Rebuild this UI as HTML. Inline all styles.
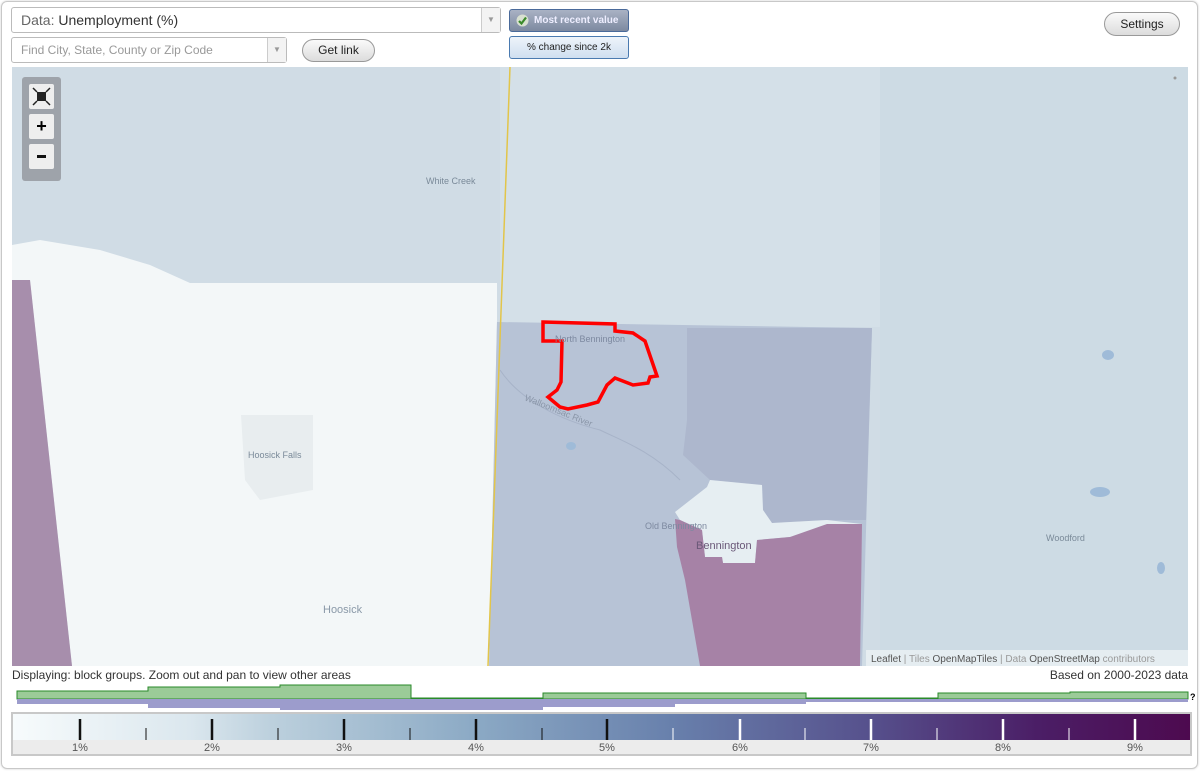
<!DOCTYPE html>
<html><head><meta charset="utf-8"><style>
*{box-sizing:border-box;margin:0;padding:0}
body{width:1200px;height:771px;background:#fff;font-family:"Liberation Sans",sans-serif;position:relative;overflow:hidden}
.card{position:absolute;left:1px;top:1px;width:1197px;height:768px;border:1px solid #c8c8c8;border-radius:6px;box-shadow:0 0 2px #ccc}
.sel{position:absolute;background:#fff;border:1px solid #bbb;border-radius:3px;color:#333}
.arrow{position:absolute;right:0;top:0;bottom:0;width:19px;border-left:1px solid #ccc;background:#f3f3f3;color:#999;font-size:8px;text-align:center}
.btn{position:absolute;border:1px solid #999;border-radius:12px;background:linear-gradient(#fafafa,#dcdcdc);font-size:12px;color:#222;text-align:center}
.t{position:absolute;font-size:12px;color:#333;white-space:nowrap}
</style></head><body>
<div class="card"></div>
<div class="sel" style="left:11px;top:7px;width:490px;height:26px;font-size:14px;line-height:24px;padding-left:9px"><span style="color:#666">Data:</span> Unemployment (%)<div class="arrow" style="line-height:24px">▼</div></div>
<div class="sel" style="left:11px;top:37px;width:276px;height:26px;font-size:12px;line-height:24px;padding-left:9px;color:#999">Find City, State, County or Zip Code<div class="arrow" style="line-height:24px">▼</div></div>
<div class="btn" style="left:302px;top:39px;width:73px;height:23px;line-height:21px">Get link</div>
<div style="position:absolute;left:509px;top:9px;width:120px;height:23px;border:1px solid #4a6a9a;border-radius:3px;background:linear-gradient(#a9b2c4,#7d89a0);color:#eef;font-size:10px;font-weight:bold;line-height:21px;padding-left:24px">Most recent value
<svg style="position:absolute;left:6px;top:4px" width="13" height="13" viewBox="0 0 13 13"><circle cx="6.5" cy="6.5" r="6" fill="#d8e0d0"/><path d="M3 7l2.5 2.5L10 3.5" stroke="#3a8a2a" stroke-width="2.2" fill="none"/></svg></div>
<div style="position:absolute;left:509px;top:36px;width:120px;height:23px;border:1px solid #4a7ab0;border-radius:3px;background:linear-gradient(#eef4fa,#cfdff0);color:#222;font-size:10px;line-height:21px;text-align:center">% change since 2k</div>
<div class="btn" style="left:1104px;top:12px;width:76px;height:24px;line-height:22px">Settings</div>

<svg style="position:absolute;left:12px;top:67px" width="1176" height="599" viewBox="12 67 1176 599">
<rect x="12" y="67" width="1176" height="599" fill="#d0dce5"/>
<rect x="500" y="67" width="380" height="260" fill="#d4e0e8"/>
<rect x="880" y="67" width="308" height="599" fill="#cddbe4"/>
<polygon points="12,245 40,240 100,250 150,265 190,283 497,283 497,320 489,666 72,666 30,280 12,280" fill="#f3f7f8"/>
<polygon points="12,280 30,280 72,666 12,666" fill="#a78eac"/>
<polygon points="241,415 313,415 313,490 260,500 245,480" fill="#e8edef"/>
<polygon points="497,322 872,328 862,666 700,666 685,580 677,547 675,512 707,487 710,480 762,485 763,510 772,523 827,520 862,524 860,666 489,666" fill="#b7c3d6"/>
<polygon points="687,328 872,328 866,520 827,520 772,523 763,510 762,485 710,480 683,455 687,420" fill="#adb7cd"/>
<polygon points="675,512 707,487 710,480 762,485 763,510 772,523 827,520 862,524 790,537 757,540 755,563 723,563 722,557 705,557 702,530 680,520" fill="#e6eef2"/>
<polygon points="675,519 680,520 702,530 705,557 722,557 723,563 755,563 757,540 790,537 827,524 862,524 860,666 700,666 685,580 677,547" fill="#a682a6"/>
<line x1="510" y1="67" x2="488" y2="666" stroke="#e2c54a" stroke-width="1.5"/>
<path d="M500,370 C520,400 560,420 600,430 C620,440 650,450 680,480" stroke="#a7b3c8" fill="none"/>
<g fill="#9fbbd8"><ellipse cx="1108" cy="355" rx="6" ry="5"/><ellipse cx="1100" cy="492" rx="10" ry="5"/><ellipse cx="571" cy="446" rx="5" ry="4"/><ellipse cx="1161" cy="568" rx="4" ry="6"/></g>
<polygon points="543,322 615,324 615,331 633,333 645,341 657,376 650,377 648,383 633,385 615,378 607,385 598,402 587,405 568,409 560,407 548,397 557,390 561,382 562,341 543,341" fill="none" stroke="#f00" stroke-width="3.5"/>
<g font-family="Liberation Sans" font-size="9" fill="#7a8a99">
<text x="426" y="184">White Creek</text><text x="248" y="458">Hoosick Falls</text>
<text x="555" y="342" fill="#7d89a0">North Bennington</text><text x="645" y="529" fill="#7d89a0">Old Bennington</text>
<text x="1046" y="541">Woodford</text></g>
<text x="323" y="613" font-family="Liberation Sans" font-size="11" fill="#8a99a8">Hoosick</text>
<text x="696" y="549" font-family="Liberation Sans" font-size="11" fill="#6a5878">Bennington</text>
<text x="524" y="400" font-family="Liberation Sans" font-size="9" fill="#8a96a8" transform="rotate(22 524 400)">Walloomsac River</text>
<circle cx="1175" cy="78" r="1.5" fill="#999"/>
<rect x="866" y="650" width="322" height="16" fill="#e8eef2" opacity=".9"/>
<text x="871" y="662" font-family="Liberation Sans" font-size="10" fill="#999"><tspan fill="#555">Leaflet</tspan> | Tiles <tspan fill="#555">OpenMapTiles</tspan> | Data <tspan fill="#555">OpenStreetMap</tspan> contributors</text>
</svg>
<div style="position:absolute;left:22px;top:77px;width:39px;height:104px;background:#9ea3aa;border-radius:3px"></div>
<div style="position:absolute;left:29px;top:84px;width:25px;height:25px;background:#eee;border-radius:2px"><svg width="25" height="25"><rect x="8" y="8" width="9" height="9" fill="#222"/><path d="M4 4l4 4M21 4l-4 4M4 21l4-4M21 21l-4-4" stroke="#222" stroke-width="1.5"/></svg></div>
<div style="position:absolute;left:29px;top:114px;width:25px;height:25px;background:#eee;border-radius:2px;font:bold 18px/24px 'Liberation Sans';text-align:center">+</div>
<div style="position:absolute;left:29px;top:144px;width:25px;height:25px;background:#eee;border-radius:2px"><div style="position:absolute;left:8px;top:11px;width:9px;height:3px;background:#111"></div></div>

<div class="t" style="left:12px;top:668px">Displaying: block groups. Zoom out and pan to view other areas</div>
<div class="t" style="right:12px;top:668px">Based on 2000-2023 data</div>
<svg style="position:absolute;left:0;top:680px" width="1200" height="32">
<path d="M17,11 H148 V7 H280 V5 H411 V18 H543 V13 H806 V18 H938 V13 H1070 V12 H1188 V19 H17Z" fill="#9bcb98" stroke="#2a8a2a" stroke-width="1"/>
<path d="M17,19 H1188 V22 H806 V24 H675 V27 H543 V30 H280 V28 H148 V24 H17Z" fill="#9c9ccc"/>
<text x="1190" y="20" font-size="9" font-weight="bold" font-family="Liberation Sans">?</text>
</svg>
<div style="position:absolute;left:11px;top:712px;width:1181px;height:44px;border:2px solid #c8c8c8;background:#ececec"></div>
<div style="position:absolute;left:13px;top:714px;width:1177px;height:26px;background:linear-gradient(90deg,#f7fbfc 0%,#dbe7ee 15%,#bcd0dd 22%,#8caac5 39%,#6880ac 56%,#56508c 73%,#4b1e66 87%,#4d0a4f 100%)"></div>
<svg style="position:absolute;left:0;top:714px" width="1200" height="45">
<g stroke-width="2.5"><g stroke="#111"><line x1="80" y1="5" x2="80" y2="26"/><line x1="212" y1="5" x2="212" y2="26"/><line x1="344" y1="5" x2="344" y2="26"/><line x1="476" y1="5" x2="476" y2="26"/><line x1="607" y1="5" x2="607" y2="26"/></g>
<g stroke="#fff"><line x1="740" y1="5" x2="740" y2="26"/><line x1="871" y1="5" x2="871" y2="26"/><line x1="1003" y1="5" x2="1003" y2="26"/><line x1="1135" y1="5" x2="1135" y2="26"/></g></g>
<g stroke-width="1"><g stroke="#111"><line x1="146" y1="14" x2="146" y2="26"/><line x1="278" y1="14" x2="278" y2="26"/><line x1="410" y1="14" x2="410" y2="26"/><line x1="542" y1="14" x2="542" y2="26"/></g>
<g stroke="#fff"><line x1="673" y1="14" x2="673" y2="26"/><line x1="805" y1="14" x2="805" y2="26"/><line x1="937" y1="14" x2="937" y2="26"/><line x1="1069" y1="14" x2="1069" y2="26"/></g></g>
<g font-family="Liberation Sans" font-size="11" fill="#555" text-anchor="middle"><text x="80" y="37">1%</text><text x="212" y="37">2%</text><text x="344" y="37">3%</text><text x="476" y="37">4%</text><text x="607" y="37">5%</text><text x="740" y="37">6%</text><text x="871" y="37">7%</text><text x="1003" y="37">8%</text><text x="1135" y="37">9%</text></g>
</svg>
</body></html>
